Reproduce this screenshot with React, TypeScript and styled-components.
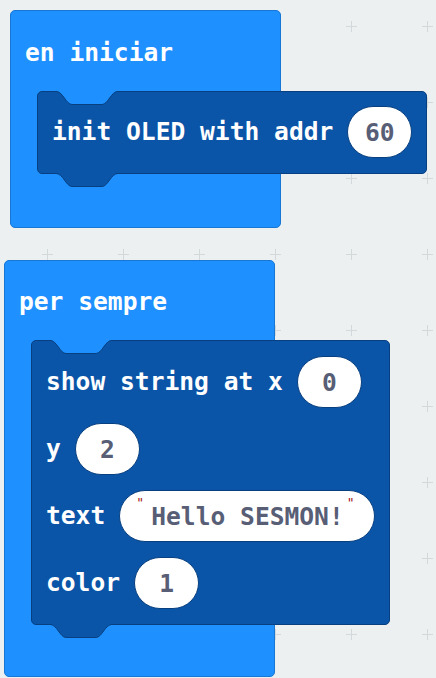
import React from 'react';
import styled, { createGlobalStyle } from 'styled-components';

const GlobalStyle = createGlobalStyle`
  html, body {
    margin: 0;
    padding: 0;
    background: #ecf0f1;
  }
`;

const EVENT_BLUE = '#1e90ff';
const EVENT_EDGE = '#1877d4';
const OLED_BLUE = '#0b55a8';
const OLED_EDGE = '#073f80';

const Workspace = styled.div`
  position: relative;
  width: 436px;
  height: 678px;
  overflow: hidden;
  background: #ecf0f1;
  font-family: 'DejaVu Sans Mono', 'Liberation Mono', monospace;
  font-weight: bold;
  font-size: 24.6px;
`;

const GridLayer = styled.svg`
  position: absolute;
  inset: 0;
  width: 100%;
  height: 100%;
`;

const EventBlock = styled.div<{ $x: number; $y: number }>`
  position: absolute;
  left: ${(p) => p.$x}px;
  top: ${(p) => p.$y}px;
  width: 269px;
  display: flex;
  flex-direction: column;
  background: ${EVENT_BLUE};
  border: 1px solid ${EVENT_EDGE};
  border-radius: 5px;
`;

const EventHeader = styled.div<{ $h: number }>`
  height: ${(p) => p.$h}px;
  display: flex;
  align-items: center;
  padding: 2px 0 0 14px;
  box-sizing: border-box;
  color: #fff;
  white-space: pre;
`;

const Mouth = styled.div`
  display: flex;
  padding-left: 26px;
`;

const EventFooter = styled.div<{ $h: number }>`
  height: ${(p) => p.$h}px;
`;

const Statement = styled.div<{ $pad: number }>`
  position: relative;
  flex: none;
  width: max-content;
  display: flex;
  flex-direction: column;
  gap: 15px;
  padding: ${(p) => p.$pad}px 14px 15px 14px;
  background: ${OLED_BLUE};
  border: 1px solid ${OLED_EDGE};
  border-radius: 5px;
`;

const Row = styled.div`
  display: flex;
  align-items: center;
  gap: 14px;
`;

const Label = styled.span`
  color: #fff;
  white-space: pre;
  line-height: 1;
  padding-top: 1px;
`;

const Pill = styled.div<{ $text?: boolean }>`
  height: 50px;
  min-width: 63px;
  box-sizing: content-box;
  display: flex;
  align-items: center;
  justify-content: ${(p) => (p.$text ? 'flex-start' : 'center')};
  padding: ${(p) => (p.$text ? '0 16px 0 13px' : '0')};
  background: #fff;
  border: 1px solid ${OLED_EDGE};
  border-radius: 26px;
  color: #575e75;
  white-space: pre;
`;

const Quote = styled.span<{ $side: 'left' | 'right' }>`
  align-self: flex-start;
  width: 14px;
  margin-top: 4px;
  margin-right: ${(p) => (p.$side === 'left' ? '4px' : '0')};
  text-align: center;
  font-size: 13px;
  color: #a31515;
  font-weight: normal;
`;

const NotchShape = styled.svg`
  position: absolute;
  top: -1px;
  left: 19px;
  display: block;
`;

const TabShape = styled.svg`
  position: absolute;
  top: 100%;
  left: 19px;
  display: block;
`;

const Notch = () => (
  <NotchShape width="60" height="15" viewBox="0 0 60 15">
    <path d="M0 0 H60 V0.5 C54 0.5 51 13.5 45 13.5 H15 C9 13.5 6 0.5 0 0.5 Z" fill={EVENT_BLUE} />
    <path d="M-1 0.5 C6 0.5 9 13.5 15 13.5 H45 C51 13.5 54 0.5 61 0.5" fill="none" stroke={OLED_EDGE} />
  </NotchShape>
);

const Tab = () => (
  <TabShape width="60" height="15" viewBox="0 0 60 15">
    <path d="M-1 -1 H61 V0.5 C54 0.5 51 13.5 45 13.5 H15 C9 13.5 6 0.5 -1 0.5 Z" fill={OLED_BLUE} />
    <path d="M-1 0.5 C6 0.5 9 13.5 15 13.5 H45 C51 13.5 54 0.5 61 0.5" fill="none" stroke={OLED_EDGE} />
  </TabShape>
);

const Grid = () => (
  <GridLayer>
    <defs>
      <pattern id="plus" x="9" y="-12" width="76" height="76" patternUnits="userSpaceOnUse">
        <path d="M33 38.5 H44 M38.5 33 V44" stroke="#d3d8db" strokeWidth="1" />
      </pattern>
    </defs>
    <rect width="100%" height="100%" fill="url(#plus)" />
  </GridLayer>
);

interface FieldProps {
  value: string;
  text?: boolean;
}

const Field: React.FC<FieldProps> = ({ value, text }) =>
  text ? (
    <Pill $text>
      <Quote $side="left">"</Quote>
      {value}
      <Quote $side="right">"</Quote>
    </Pill>
  ) : (
    <Pill>{value}</Pill>
  );

export default function App() {
  return (
    <>
      <GlobalStyle />
      <Workspace>
        <Grid />

        <EventBlock $x={10} $y={10}>
          <EventHeader $h={80}>en iniciar</EventHeader>
          <Mouth>
            <Statement $pad={14}>
              <Notch />
              <Row>
                <Label>init OLED with addr</Label>
                <Field value="60" />
              </Row>
              <Tab />
            </Statement>
          </Mouth>
          <EventFooter $h={53} />
        </EventBlock>

        <EventBlock $x={4} $y={260}>
          <EventHeader $h={79}>per sempre</EventHeader>
          <Mouth>
            <Statement $pad={15}>
              <Notch />
              <Row>
                <Label>show string at x</Label>
                <Field value="0" />
              </Row>
              <Row>
                <Label>y</Label>
                <Field value="2" />
              </Row>
              <Row>
                <Label>text</Label>
                <Field value="Hello SESMON!" text />
              </Row>
              <Row>
                <Label>color</Label>
                <Field value="1" />
              </Row>
              <Tab />
            </Statement>
          </Mouth>
          <EventFooter $h={51} />
        </EventBlock>
      </Workspace>
    </>
  );
}
